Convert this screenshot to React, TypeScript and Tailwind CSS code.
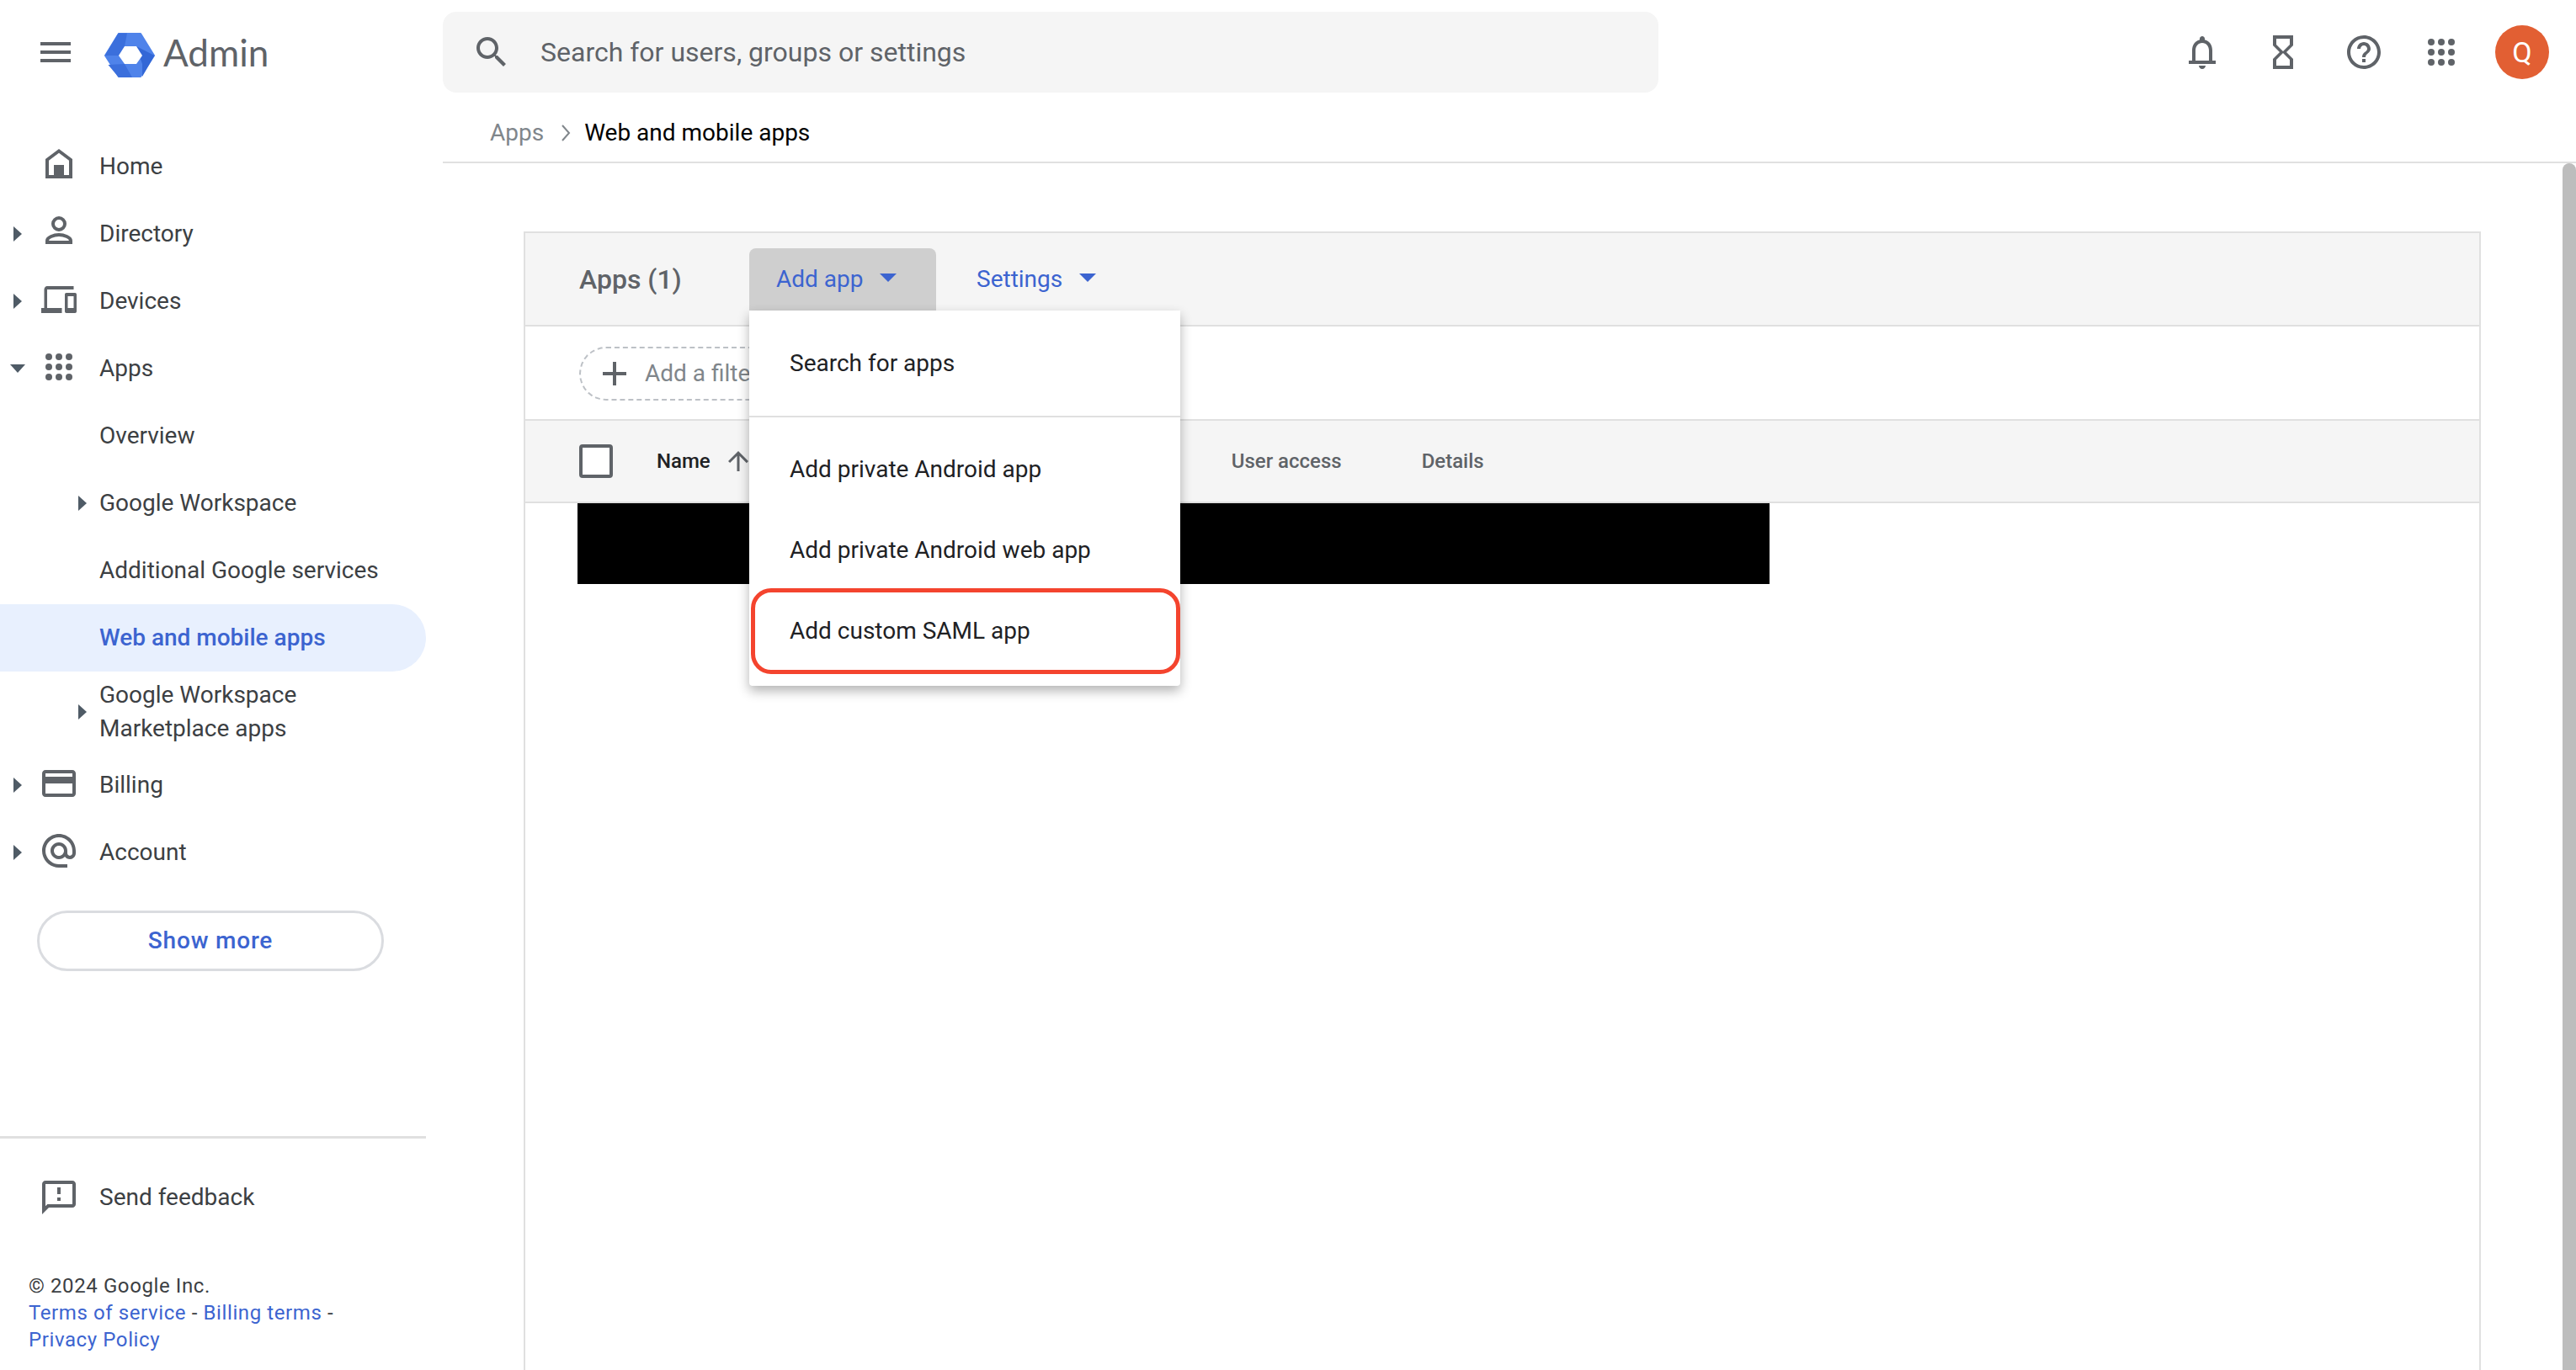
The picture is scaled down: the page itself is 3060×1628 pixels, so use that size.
import React from 'react';

const iconPaths = {
  menu: 'M3 18h18v-2H3v2zm0-5h18v-2H3v2zm0-7v2h18V6H3z',
  search:
    'M15.5 14h-.79l-.28-.27C15.41 12.59 16 11.11 16 9.5 16 5.91 13.09 3 9.5 3S3 5.91 3 9.5 5.91 16 9.5 16c1.61 0 3.09-.59 4.23-1.57l.27.28v.79l5 4.99L20.49 19l-4.99-5zm-6 0C7.01 14 5 11.99 5 9.5S7.01 5 9.5 5 14 7.01 14 9.5 11.99 14 9.5 14z',
  bell: 'M12 22c1.1 0 2-.9 2-2h-4c0 1.1.9 2 2 2zM4 17h16v2H4zM6 17v-6c0-3.07 1.64-5.64 4.5-6.32V4c0-.83.67-1.5 1.5-1.5s1.5.67 1.5 1.5v.68C16.37 5.36 18 7.93 18 11v6h-2v-6c0-2.48-1.51-4.5-4-4.5S8 8.52 8 11v6z',
  hourglass:
    'M6 2v6h.01L6 8.01 10 12l-4 4 .01.01H6V22h12v-5.99h-.01L18 16l-4-4 4-3.99-.01-.01H18V2H6zm10 14.5V20H8v-3.5l4-4 4 4zm-4-5l-4-4V4h8v3.5l-4 4z',
  help: 'M11 18h2v-2h-2v2zm1-16C6.48 2 2 6.48 2 12s4.48 10 10 10 10-4.48 10-10S17.52 2 12 2zm0 18c-4.41 0-8-3.59-8-8s3.59-8 8-8 8 3.59 8 8-3.59 8-8 8zm0-14c-2.21 0-4 1.79-4 4h2c0-1.1.9-2 2-2s2 .9 2 2c0 2-3 1.75-3 5h2c0-2.25 3-2.5 3-5 0-2.21-1.79-4-4-4z',
  card: 'M20 4H4c-1.11 0-1.99.89-1.99 2L2 18c0 1.11.89 2 2 2h16c1.11 0 2-.89 2-2V6c0-1.11-.89-2-2-2zm0 14H4v-6h16v6zm0-10H4V6h16v2z',
  email:
    'M12 2C6.48 2 2 6.48 2 12s4.48 10 10 10h5v-2h-5c-4.34 0-8-3.66-8-8s3.66-8 8-8 8 3.66 8 8v1.43c0 .79-.71 1.57-1.5 1.57s-1.5-.78-1.5-1.57V12c0-2.76-2.24-5-5-5s-5 2.24-5 5 2.24 5 5 5c1.38 0 2.64-.56 3.54-1.47.65.89 1.77 1.47 2.96 1.47 1.97 0 3.5-1.6 3.5-3.57V12c0-5.52-4.48-10-10-10zm0 13c-1.66 0-3-1.34-3-3s1.34-3 3-3 3 1.34 3 3-1.34 3-3 3z',
  feedback:
    'M20 2H4c-1.1 0-1.99.9-1.99 2L2 22l4-4h14c1.1 0 2-.9 2-2V4c0-1.1-.9-2-2-2zm0 14H5.17L4 17.17V4h16v12zm-9-4h2v2h-2zm0-6h2v4h-2z',
  plus: 'M19 13h-6v6h-2v-6H5v-2h6V5h2v6h6v2z',
  up: 'M4 12l1.41 1.41L11 7.83V20h2V7.83l5.58 5.59L20 12l-8-8-8 8z',
};

type IconName = keyof typeof iconPaths;

const Icon = ({ name, className = 'w-12 h-12 shrink-0' }: { name: IconName; className?: string }) => (
  <svg viewBox="0 0 24 24" className={className} fill="#5f6368" fillRule="evenodd">
    <path d={iconPaths[name]} />
  </svg>
);

const Dots = () => (
  <svg viewBox="0 0 48 48" className="w-12 h-12 shrink-0" fill="#5f6368">
    {[12, 24, 36].map((y) =>
      [12, 24, 36].map((x) => <circle key={`${x}-${y}`} cx={x} cy={y} r="4" />),
    )}
  </svg>
);

const HomeIcon = () => (
  <svg viewBox="0 0 48 48" className="w-12 h-12 shrink-0" fill="#5f6368">
    <path fillRule="evenodd" d="M24 5L40 17V40H8V17zM24 9.800L12 18.800V36H36V18.800z" />
    <path d="M18 24H30V37H18z" />
  </svg>
);

const PersonIcon = () => (
  <svg viewBox="0 0 48 48" className="w-12 h-12 shrink-0" fill="none" stroke="#5f6368" strokeWidth="4">
    <circle cx="24" cy="14" r="7" />
    <path d="M10 36V34C10 30 18 27 24 27C30 27 38 30 38 34V36Z" />
  </svg>
);

const DevicesIcon = () => (
  <svg viewBox="0 4 24 16" preserveAspectRatio="none" className="w-[42px] h-8 mx-[3px] shrink-0" fill="#5f6368" fillRule="evenodd">
    <path d="M4 6h18V4H4c-1.100 0-2 .9-2 2v11H0v3h14v-3H4V6zm19 2h-6c-.55 0-1 .45-1 1v10c0 .55.45 1 1 1h6c.55 0 1-.45 1-1V9c0-.55-.45-1-1-1zm-1 9h-4v-7h4v7z" />
  </svg>
);

const Logo = () => (
  <svg viewBox="0 0 60 54" className="w-[60px] h-[54px] shrink-0">
    <path
      d="M17 1H43L59 27L43 52H17L1 27Z"
      fill="#4f83ea"
      stroke="#4f83ea"
      strokeWidth="2"
      strokeLinejoin="round"
    />
    <path d="M16.500 0.500H27L24 16L17 27H0.500Z" fill="#3b6fdc" />
    <path d="M38 16L59.500 27L45 52L45 37Z" fill="#3367d6" />
    <path d="M4.500 38L24 37L33 53H17Z" fill="#3b6fdc" />
    <path d="M24 16H38L45 27L38 37H24L17 27Z" fill="#ffffff" />
  </svg>
);

const Caret = ({ open = false }: { open?: boolean }) =>
  open ? (
    <svg viewBox="0 0 18 10" className="w-[18px] h-[10px]" fill="#4f5b66">
      <path d="M0 0H18L9 10Z" />
    </svg>
  ) : (
    <svg viewBox="0 0 10 18" className="w-[10px] h-[18px]" fill="#4f5b66">
      <path d="M0 0L10 9L0 18Z" />
    </svg>
  );

const BlueCaret = () => (
  <svg viewBox="0 0 20 10" className="w-5 h-[10px]" fill="#3c64d0">
    <path d="M0 0H20L10 10Z" />
  </svg>
);

const NavRow = ({
  label,
  icon,
  caret,
  open,
}: {
  label: string;
  icon: React.ReactNode;
  caret?: boolean;
  open?: boolean;
}) => (
  <div className="h-20 flex items-center">
    <div className="w-[42px] mr-1 flex justify-center shrink-0">{caret && <Caret open={open} />}</div>
    <div className="w-12 flex justify-center -mt-1 shrink-0">{icon}</div>
    <span className="ml-6 text-[#3c4043]">{label}</span>
  </div>
);

const SubRow = ({ label, caret }: { label: string; caret?: boolean }) => (
  <div className="h-20 flex items-center">
    <div className="w-[118px] shrink-0 flex justify-end pr-[15px]">{caret && <Caret />}</div>
    <span className="text-[#3c4043]">{label}</span>
  </div>
);

const Sidebar = () => (
  <aside className="w-[506px] shrink-0 flex flex-col pt-[34px] text-[28px]">
    <NavRow label="Home" icon={<HomeIcon />} />
    <NavRow label="Directory" icon={<PersonIcon />} caret />
    <NavRow label="Devices" icon={<DevicesIcon />} caret />
    <NavRow label="Apps" icon={<Dots />} caret open />
    <SubRow label="Overview" />
    <SubRow label="Google Workspace" caret />
    <SubRow label="Additional Google services" />
    <div className="h-20 pl-[118px] flex items-center rounded-r-full bg-[#e8f0fe] text-[#3c64d0] font-medium">
      Web and mobile apps
    </div>
    <div className="h-[95px] flex items-center">
      <div className="w-[118px] shrink-0 flex justify-end pr-[15px]">
        <Caret />
      </div>
      <span className="text-[#3c4043] leading-10">
        Google Workspace
        <br />
        Marketplace apps
      </span>
    </div>
    <NavRow label="Billing" icon={<Icon name="card" />} caret />
    <NavRow label="Account" icon={<Icon name="email" />} caret />
    <div className="pt-[29px] pl-11">
      <div className="w-[412px] h-[72px] border-[3px] border-[#dadce0] rounded-full flex items-center justify-center text-[#3c64d0] font-medium tracking-[0.8px]">
        Show more
      </div>
    </div>
    <div className="mt-auto border-t-[3px] border-[#e0e0e0] pt-[46px] pb-[20px]">
      <div className="flex items-center pl-[46px]">
        <Icon name="feedback" />
        <span className="ml-6 text-[#3c4043]">Send feedback</span>
      </div>
      <div className="pl-[34px] pt-[65px] text-[24px] leading-8 tracking-[0.6px] text-[#3c4043]">
        <div>© 2024 Google Inc.</div>
        <div>
          <span className="text-[#3c64d0]">Terms of service</span> - <span className="text-[#3c64d0]">Billing terms</span> -
        </div>
        <div className="text-[#3c64d0]">Privacy Policy</div>
      </div>
    </div>
  </aside>
);

const MenuItem = ({ label }: { label: string }) => (
  <div className="h-24 pl-12 flex items-center text-[28px] text-[#202124]">{label}</div>
);

const AddAppMenu = () => (
  <div className="absolute left-0 top-full w-[512px] h-[446px] z-10 bg-white rounded-b shadow-[0_6px_14px_rgba(0,0,0,0.3)]">
    <div className="h-[127px] pl-12 flex items-center text-[28px] text-[#202124] border-b-2 border-[#e0e0e0]">
      Search for apps
    </div>
    <div className="pt-[14px]">
      <MenuItem label="Add private Android app" />
      <MenuItem label="Add private Android web app" />
      <MenuItem label="Add custom SAML app" />
    </div>
    <div className="absolute left-[2px] right-0 top-[330px] h-[102px] border-[5px] border-[#f4442e] rounded-[24px]" />
  </div>
);

const App = () => (
  <div className="w-[3060px] h-[1628px] overflow-hidden bg-white flex flex-col font-['Roboto',sans-serif]">
    <header className="h-[124px] shrink-0 flex items-start">
      <div className="w-[526px] shrink-0 flex items-center pl-[42px] pt-[31px]">
        <Icon name="menu" />
        <div className="ml-[34px] mt-2">
          <Logo />
        </div>
        <span className="ml-[10px] text-[44px] leading-none font-['Lato',sans-serif] text-[#5f6368]">Admin</span>
      </div>
      <div className="w-[1444px] h-24 mt-[14px] rounded-2xl bg-[#f5f5f5] flex items-center pl-[34px]">
        <Icon name="search" />
        <span className="ml-[34px] text-[32px] text-[#5f6368]">Search for users, groups or settings</span>
      </div>
      <div className="flex-1 flex items-center justify-end pt-[30px] pr-8">
        <Icon name="bell" />
        <div className="ml-[48px]">
          <Icon name="hourglass" />
        </div>
        <div className="ml-[48px]">
          <Icon name="help" />
        </div>
        <div className="ml-[44px]">
          <Dots />
        </div>
        <div className="ml-[40px] w-16 h-16 rounded-full bg-[#e25f33] text-white text-[34px] flex items-center justify-center">
          Q
        </div>
      </div>
    </header>

    <div className="flex-1 flex min-h-0">
      <Sidebar />
      <main className="flex-1 ml-5 flex flex-col min-w-0">
        <div className="h-[70px] shrink-0 flex items-center pl-14 border-b-2 border-[#e0e0e0] text-[28px]">
          <span className="text-[#80868b]">Apps</span>
          <svg viewBox="0 0 12 20" className="w-[12px] h-[20px] ml-[20px] mr-4" fill="none" stroke="#80868b" strokeWidth="2">
            <path d="M2 1L10 10L2 19" />
          </svg>
          <span className="text-black">Web and mobile apps</span>
        </div>

        <div className="flex-1 flex min-h-0">
          <div className="flex-1 pt-[81px] pl-24 pr-[97px] flex flex-col min-w-0">
            <div className="flex-1 border-2 border-b-0 border-[#e0e0e0] flex flex-col">
              <div className="h-[111px] shrink-0 bg-[#f5f5f5] border-b-2 border-[#e0e0e0] flex items-start pl-[64px]">
                <span className="mt-9 w-[202px] text-[32px] leading-[38px] text-[#5f6368] font-medium">Apps (1)</span>
                <div className="relative mt-[18px] w-[222px] h-[74px] bg-[#cfcfcf] rounded-t-lg flex items-center pl-8 text-[#3c64d0] text-[28px]">
                  Add app
                  <span className="ml-5 mb-1">
                    <BlueCaret />
                  </span>
                  <AddAppMenu />
                </div>
                <div className="mt-[18px] h-[74px] ml-12 flex items-center text-[#3c64d0] text-[28px]">
                  Settings
                  <span className="ml-5 mb-1">
                    <BlueCaret />
                  </span>
                </div>
              </div>

              <div className="h-[112px] shrink-0 border-b-2 border-[#e0e0e0] flex items-center pl-[64px] pt-[2px]">
                <div className="w-[260px] h-[64px] rounded-full border-2 border-dashed border-[#bdc1c6] flex items-center pl-[16px] text-[28px] text-[#80868b]">
                  <Icon name="plus" />
                  <span className="ml-[12px]">Add a filter</span>
                </div>
              </div>

              <div className="h-[98px] shrink-0 bg-[#f5f5f5] border-b-2 border-[#e0e0e0] flex items-center pl-[64px] text-[24px] font-medium text-[#5f6368]">
                <div className="w-10 h-10 rounded border-4 border-[#5f6368] bg-white shrink-0" />
                <span className="ml-[52px] text-[#202124]">Name</span>
                <span className="ml-[15px]">
                  <Icon name="up" className="w-9 h-9" />
                </span>
                <span className="ml-[568px]">User access</span>
                <span className="ml-[95px]">Details</span>
              </div>

              <div className="ml-[62px] w-[1416px] h-24 bg-black shrink-0" />
            </div>
          </div>
          <div className="w-4 shrink-0 bg-[#bdbdbd] rounded-t-full" />
        </div>
      </main>
    </div>
  </div>
);

export default App;
